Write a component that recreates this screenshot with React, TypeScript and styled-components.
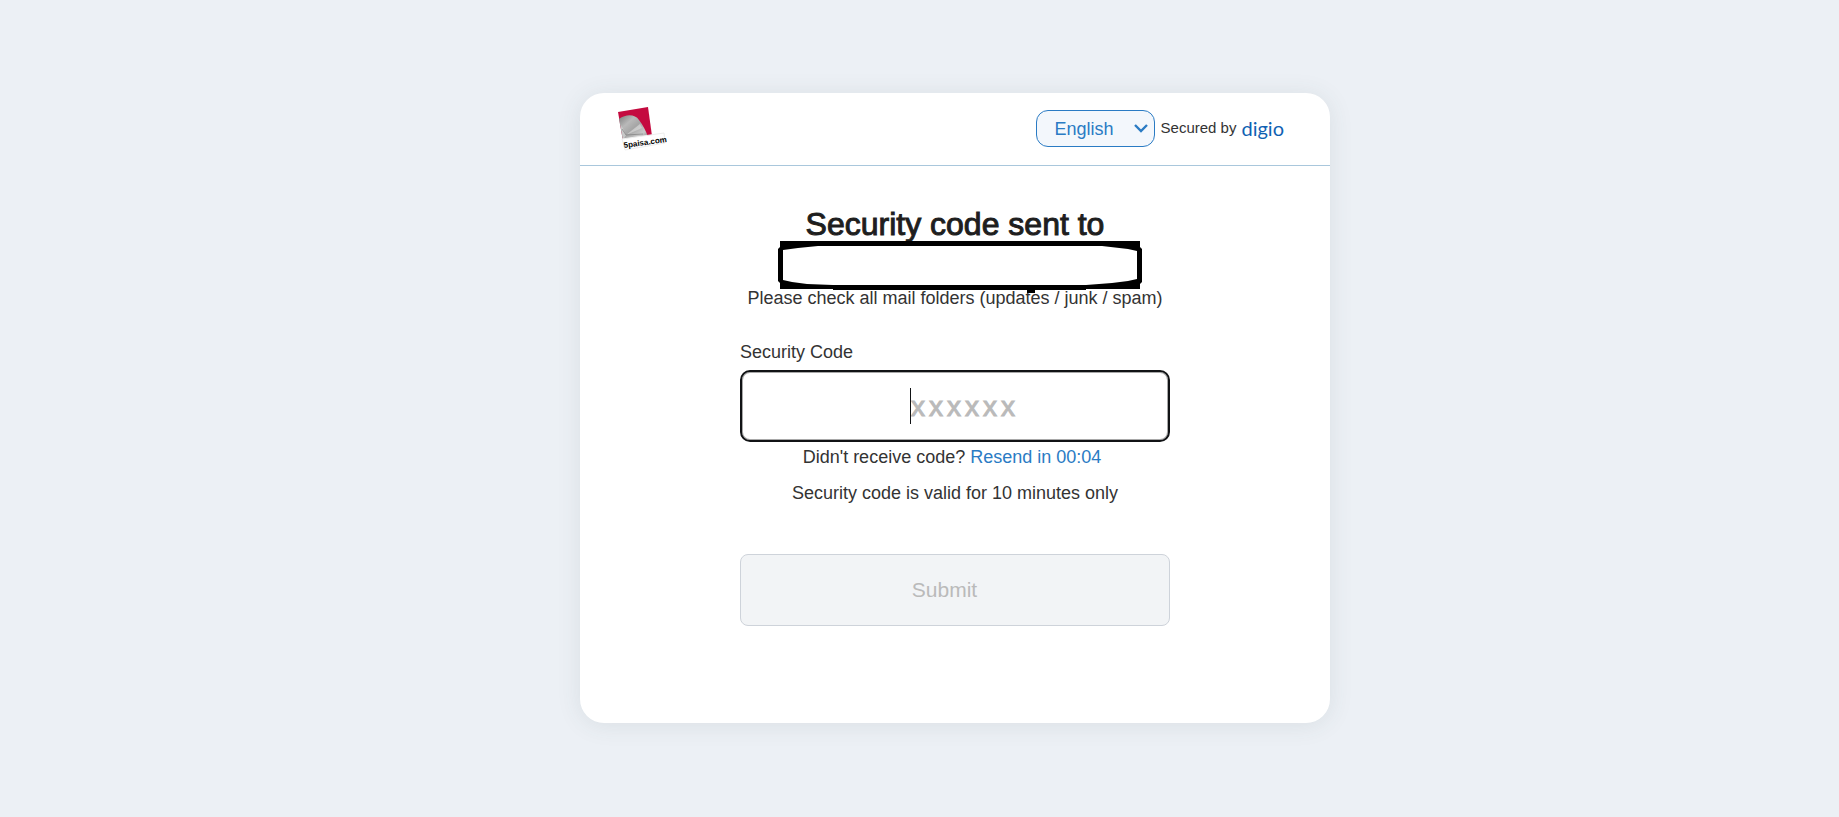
import React from "react";
import styled, { createGlobalStyle } from "styled-components";

const GlobalStyle = createGlobalStyle`
  * { box-sizing: border-box; }
  body {
    margin: 0;
    background: #ecf0f5;
    color: #333333;
    font-family: "Liberation Sans", Arial, Helvetica, sans-serif;
    font-size: 18px;
    line-height: 24px;
  }
`;

const Page = styled.main`
  min-height: 100vh;
  display: flex;
  align-items: center;
  justify-content: center;
  padding: 24px 0 26px 71px;
`;

const Card = styled.section`
  width: 100%;
  max-width: 750px;
  background: #ffffff;
  border-radius: 24px;
  box-shadow: 0 2px 24px rgba(60, 80, 80, 0.1);
`;

const Header = styled.header`
  display: flex;
  align-items: center;
  justify-content: space-between;
  height: 73px;
  padding: 0 46px 0 38px;
  border-bottom: 1px solid #a9c7dc;
`;

const HeaderTools = styled.div`
  display: flex;
  align-items: center;
  gap: 6px;
`;

const SelectWrap = styled.div`
  position: relative;
  width: 119px;
  height: 37px;
`;

const Select = styled.select`
  appearance: none;
  width: 100%;
  height: 100%;
  padding: 0 30px 0 18px;
  border: 1px solid #2a7bc4;
  border-radius: 12px;
  background: #f3f7fc;
  color: #2a7bc4;
  font: inherit;
`;

const Chevron = styled.svg`
  position: absolute;
  top: 13px;
  right: 7px;
  pointer-events: none;
`;

const Attribution = styled.div`
  display: flex;
  align-items: center;
  gap: 5px;
  padding-bottom: 2px;
`;

const Secured = styled.span`
  font-size: 15px;
`;

const Digio = styled.a`
  font-family: Lato, sans-serif;
  font-size: 20px;
  color: #0f62b3;
  text-decoration: none;
`;

const Content = styled.form`
  display: flex;
  flex-direction: column;
  align-items: center;
  width: 100%;
  max-width: 430px;
  margin: 0 auto;
  padding: 41px 0 97px;
`;

const Title = styled.h1`
  margin: 0;
  font-size: 32px;
  line-height: 34px;
  font-weight: 400;
  color: #1e1e1e;
  -webkit-text-stroke: 1px currentColor;
`;

const Redaction = styled.svg`
  position: relative;
  display: block;
  overflow: visible;
  margin-left: 10px;
`;

const Text = styled.p`
  margin: 0;
  white-space: nowrap;
`;

const Label = styled.label`
  align-self: flex-start;
  margin: 30px 0 6px;
`;

const CodeField = styled.div`
  position: relative;
  width: 100%;
  margin-bottom: 3px;
`;

const CodeInput = styled.input`
  display: block;
  width: 100%;
  height: 72px;
  padding: 2px 0 0 20px;
  border: 2px solid #111315;
  border-radius: 10px;
  outline: none;
  background: #ffffff;
  box-shadow: inset 0 0 0 1px #a8a8a8;
  color: #333333;
  caret-color: transparent;
  font: 28px "Liberation Sans", Arial, sans-serif;
  letter-spacing: 4px;
  text-align: center;

  &::placeholder {
    color: #bababa;
    opacity: 1;
    -webkit-text-stroke: 1px #bababa;
  }
`;

const Caret = styled.span`
  position: absolute;
  left: calc(50% - 45px);
  top: 18px;
  width: 1px;
  height: 36px;
  background: #111315;
`;

const ResendRow = styled(Text)`
  padding-right: 6px;
`;

const Resend = styled.a`
  color: #2a7bc4;
  text-decoration: none;
`;

const Validity = styled(Text)`
  margin: 12px 0 49px;
`;

const Submit = styled.button`
  width: 100%;
  height: 72px;
  padding: 0 21px 0 0;
  border: 1px solid #ced3da;
  border-radius: 8px;
  background: #f2f4f6;
  color: #bababa;
  font-family: inherit;
  font-size: 21px;
`;

function BrandLogo() {
  return (
    <svg width="49" height="46" viewBox="0 0 49 46" role="img" aria-label="5paisa.com">
      <defs>
        <linearGradient id="coin" x1="0" y1="0" x2="1" y2="1">
          <stop offset="0" stopColor="#7d7d7d" />
          <stop offset="0.3" stopColor="#b9b9b9" />
          <stop offset="0.5" stopColor="#a5a5a5" />
          <stop offset="0.75" stopColor="#c9c9c9" />
          <stop offset="1" stopColor="#777777" />
        </linearGradient>
      </defs>
      <path d="M0 6 30 1 34 30 5 35Z" fill="#c40a3f" />
      <path d="M1 13C8 8 17 8 21 14C25 19 28 25 30 31L5 35Z" fill="url(#coin)" />
      <path d="M8 29 3 19 5 34ZM8 29 22 18 24 22Z" fill="#dddddd" opacity="0.6" />
      <path d="M8 29 4 23M8 29 25 28" stroke="#777777" opacity="0.6" />
      <path d="M4 33 46 27 47 37 7 44Z" fill="#ffffff" stroke="#eeeeee" />
      <text
        x="6"
        y="42"
        transform="rotate(-8 6 42)"
        fontFamily="Liberation Sans Narrow, Liberation Sans, sans-serif"
        fontSize="8"
        fontWeight="700"
        fill="#000000"
      >
        5paisa.com
      </text>
    </svg>
  );
}

export default function App() {
  return (
    <>
      <GlobalStyle />
      <Page>
        <Card>
          <Header>
            <BrandLogo />
            <HeaderTools>
              <SelectWrap>
                <Select aria-label="Language" defaultValue="English">
                  <option>English</option>
                </Select>
                <Chevron width="14" height="10" viewBox="0 0 14 10">
                  <path d="M1 2 7 8 13 2" fill="none" stroke="#2a7bc4" strokeWidth="2.4" />
                </Chevron>
              </SelectWrap>
              <Attribution>
                <Secured>Secured by</Secured>
                <Digio href="#">digio</Digio>
              </Attribution>
            </HeaderTools>
          </Header>
          <Content onSubmit={(e) => e.preventDefault()}>
            <Title>Security code sent to</Title>
            <Redaction width="364" height="45" viewBox="0 0 364 45" aria-hidden="true">
              <path
                fillRule="evenodd"
                d="M2 0H362V6L364 8V41L362 43V48H308V49H257V52H249V49H55V48H2V42L0 40V8L2 6ZM5 9V39L14 41 29 43 55 44H308L334 42 350 40 359 38V10L350 8 324 5H40L20 7Z"
              />
            </Redaction>
            <Text>Please check all mail folders (updates / junk / spam)</Text>
            <Label htmlFor="code">Security Code</Label>
            <CodeField>
              <CodeInput id="code" type="text" inputMode="numeric" maxLength={6} placeholder="xxxxxx" />
              <Caret />
            </CodeField>
            <ResendRow>
              Didn't receive code? <Resend href="#">Resend in 00:04</Resend>
            </ResendRow>
            <Validity>Security code is valid for 10 minutes only</Validity>
            <Submit type="submit" disabled>
              Submit
            </Submit>
          </Content>
        </Card>
      </Page>
    </>
  );
}
